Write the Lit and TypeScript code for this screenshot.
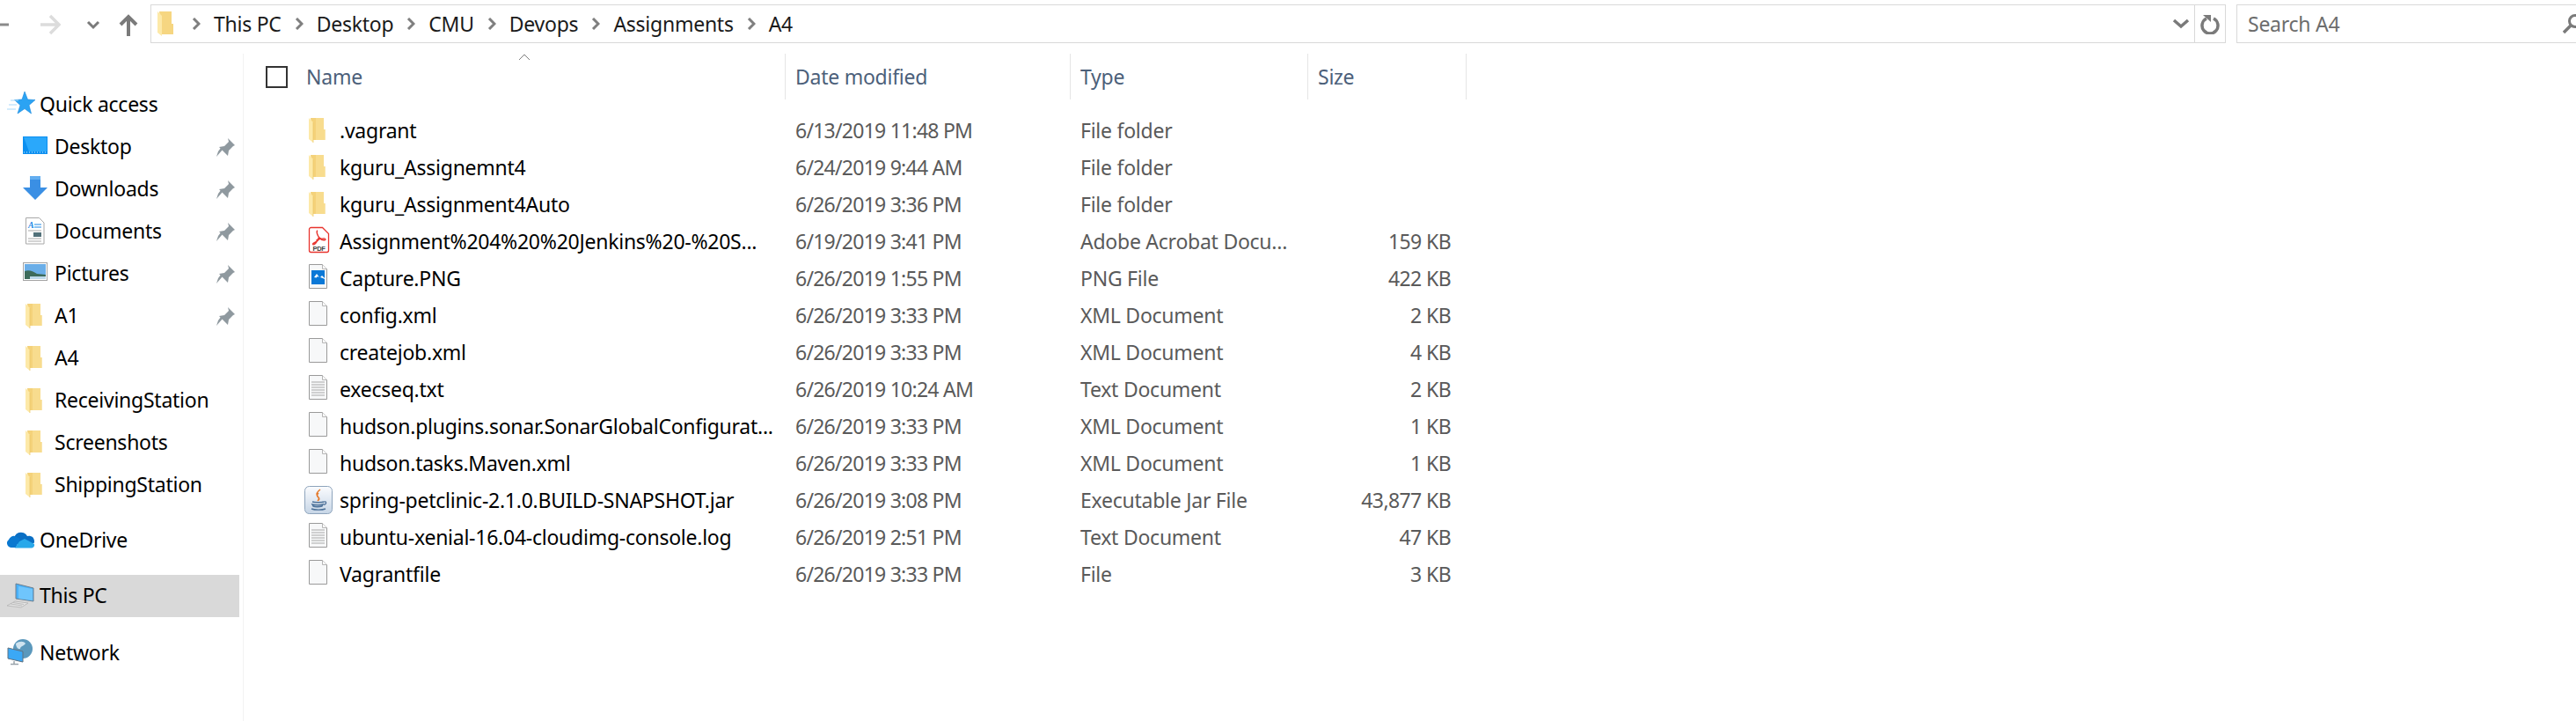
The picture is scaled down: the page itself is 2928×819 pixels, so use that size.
import { LitElement, html, css, svg } from 'lit'
import { customElement } from 'lit/decorators.js'

// icons are all drawn in a 32x32 box so rows line up the same way explorer does it
const icon = (body: unknown) => html`<svg class="ico" width="32" height="32" viewBox="0 0 32 32">${body}</svg>`

const folder = () => icon(svg`
  <path d="M7 2h15v13h1.5v12H10z" fill="#f4d27a"/>
  <path d="M13 2h9v13h1.5v12H13z" fill="#fadf96" opacity=".75"/>
  <path d="M5 2l5 5v23l-5-4z" fill="#fde9a8"/>
  <path d="M10 7v23" stroke="#e9c566" stroke-width=".7"/>`)

const page = (inner: unknown = '') => icon(svg`
  <path d="M5.500 .5h15l5 5v22h-20z" fill="#f7f8f9" stroke="#9a9a9a"/>
  <path d="M20.500 .5v5h5" fill="#fff" stroke="#b5b5b5"/>
  ${inner}`)

const textDoc = () => page(svg`
  <path d="M8 8h15M8 11h15M8 14h15M8 17h15M8 20h15M8 23h15" stroke="#a8a8a8" stroke-width="1"/>`)

const picDoc = () => page(svg`
  <rect x="8" y="7" width="15" height="16" fill="#0a78d7"/>
  <path d="M11 15l3-4 3 4-2-1-1.500 1.500zM18 15l2-2 3 3v1l-2-1z" fill="#fff"/>`)

const pdfDoc = () => icon(svg`
  <path d="M5.500 2.500a2 2 0 0 1 2-2h13l7 7v19a2 2 0 0 1-2 2h-18a2 2 0 0 1-2-2z" fill="#fff" stroke="#e8342e" stroke-width="1.300"/>
  <path d="M15 4c-2 1 0 5 1.500 7.500S13 17 10 18.500c-1 .8 0 2 1.500 1 2-1.500 4-5.500 5-8 2 2.500 5 3.500 7 3 1-.5 0-2-2-1.500-3 0-6 .5-8 2" fill="none" stroke="#e8342e" stroke-width="1.400"/>
  <text x="16.500" y="26.500" text-anchor="middle" font-size="7.500" font-weight="700" font-family="Liberation Sans" fill="#444">PDF</text>`)

const javaIco = () => icon(svg`
  <defs><linearGradient id="jv" x1="0" y1="0" x2="0" y2="1"><stop offset="0" stop-color="#fbfcfe"/><stop offset="1" stop-color="#c6d5e6"/></linearGradient></defs>
  <rect x=".5" y=".5" width="31" height="31" rx="5" fill="url(#jv)" stroke="#8ea4bc"/>
  <path d="M18 4c-5 4-5 6-2 9 1 1.500 0 3-1 4M16 8c-2 2-2 4 0 5 1 1 1 2.500 0 3" fill="none" stroke="#e5792a" stroke-width="1.500"/>
  <path d="M9 18c3 1 11 1 13 0M9 21c3 1 10 1 12 0l-1 2c-3 1-8 1-10 0zM8 26c4 1.500 12 1.500 16 0" fill="none" stroke="#4c7199" stroke-width="1.400"/>
  <path d="M22 18c3-1 4 2 0 3.500" fill="none" stroke="#4c7199" stroke-width="1.200"/>`)

const star = () => icon(svg`
  <path d="M20 1l3.500 9 8.500.5-7 6 2.500 9.500-7.500-5.500-8 5.500 3-9.500-6.500-6 8.500-.5z" fill="#2ba3f3" stroke="#1686dc" stroke-width=".6"/>
  <path d="M4 11h9M2 16h9M0 21h10" stroke="#a7d8fa" stroke-width="1"/>`)

const desktop = () => icon(svg`
  <rect x="2" y="4" width="28" height="20" fill="#0b8ff0"/>
  <path d="M3 5h26v16H9z" fill="#2aa8fb"/>
  <path d="M3 22h26" stroke="#cfe9fd" stroke-width="1" stroke-dasharray="1 2"/>`)

const download = () => icon(svg`
  <path d="M10 1h12v13h8L16 28 2 14h8z" fill="#3a8fe4"/>
  <path d="M10 1h12v4H10z" fill="#63aef0"/>`)

const docs = () => icon(svg`
  <path d="M5.500 .5h15l5.500 5.500v24h-20.500z" fill="#fff" stroke="#a8a8a8"/>
  <text x="8" y="12" font-size="10" font-style="italic" font-weight="700" font-family="Liberation Serif" fill="#1e88e5">A</text>
  <path d="M15 8h8M15 11h8" stroke="#1e88e5" stroke-width="1"/>
  <path d="M8 15h15M8 24h15M8 27h15" stroke="#a8a8a8" stroke-width="1"/>
  <rect x="14" y="17" width="9" height="5" fill="#52717a"/>`)

const pictures = () => icon(svg`
  <rect x="2.500" y="3.500" width="27" height="20" fill="#fff" stroke="#a3a3a3"/>
  <rect x="4" y="5" width="24" height="17" fill="#6aaee8"/>
  <path d="M4 13c5-2 9 0 14 3l10 1v5H4z" fill="#3d6b5a"/>
  <path d="M10 19h18v3H10z" fill="#bcd9ea"/>`)

const onedrive = () => icon(svg`
  <path d="M8 16a8 8 0 0 1 15-5 6 6 0 0 1 8 6c0 1 0 1.500-.5 2L14 22z" fill="#0a6fc4"/>
  <path d="M2 15a6 6 0 0 1 7-4l6 3-5 10H5a5 5 0 0 1-3-9z" fill="#0a78d0"/>
  <path d="M14 17l6-3 11 6a3.500 3.500 0 0 1-3 4.500H9z" fill="#28a8ea"/>`)

const thispc = () => icon(svg`
  <path d="M10 2l20 5v15l-20-3z" fill="#48b1f9" stroke="#6c7f90"/>
  <path d="M13 5l16 3v13l-16-2z" fill="#6fc5fc"/>
  <path d="M0 27l9-5 15 2-8 5z" fill="#e3e3e3" stroke="#b3b3b3" stroke-width=".8"/>
  <path d="M4 25l13 2M7 23.500l12 2" stroke="#b3b3b3" stroke-width=".8"/>`)

const network = () => icon(svg`
  <circle cx="18" cy="11" r="11" fill="#5b98bc"/>
  <path d="M10 5c4-3 9-3 11 0-2 3-6 3-6 6-3 1-5-3-5-6z" fill="#cfe3ef"/>
  <path d="M1 10l17 4v12L1 22z" fill="#3ba8f5" stroke="#60717f"/>
  <path d="M8 25v3M4 28.500h9" stroke="#9aa4ab" stroke-width="1.500"/>`)

const pin = () => html`<svg class="pin" width="21" height="21" viewBox="0 0 21 21">
  <path d="M13 0l8 8-2 1-5 5-1 6L3 10l6-1 5-5z" fill="#8f999f"/>
  <path d="M7 13l-7 8 2-6 3-4z" fill="#8f999f"/>
</svg>`

const crumbChev = () => html`<svg width="10" height="14" viewBox="0 0 10 14"><path d="M2 1l6 6-6 6" fill="none" stroke="#7f7f7f" stroke-width="3"/></svg>`

const quick = [
  { name: 'Desktop', ico: desktop, pinned: true },
  { name: 'Downloads', ico: download, pinned: true },
  { name: 'Documents', ico: docs, pinned: true },
  { name: 'Pictures', ico: pictures, pinned: true },
  { name: 'A1', ico: folder, pinned: true },
  { name: 'A4', ico: folder },
  { name: 'ReceivingStation', ico: folder },
  { name: 'Screenshots', ico: folder },
  { name: 'ShippingStation', ico: folder },
]

const files = [
  { name: '.vagrant', ico: folder, date: '6/13/2019 11:48 PM', type: 'File folder', size: '' },
  { name: 'kguru_Assignemnt4', ico: folder, date: '6/24/2019 9:44 AM', type: 'File folder', size: '' },
  { name: 'kguru_Assignment4Auto', ico: folder, date: '6/26/2019 3:36 PM', type: 'File folder', size: '' },
  { name: 'Assignment%204%20%20Jenkins%20-%20S...', ico: pdfDoc, date: '6/19/2019 3:41 PM', type: 'Adobe Acrobat Docu...', size: '159 KB' },
  { name: 'Capture.PNG', ico: picDoc, date: '6/26/2019 1:55 PM', type: 'PNG File', size: '422 KB' },
  { name: 'config.xml', ico: page, date: '6/26/2019 3:33 PM', type: 'XML Document', size: '2 KB' },
  { name: 'createjob.xml', ico: page, date: '6/26/2019 3:33 PM', type: 'XML Document', size: '4 KB' },
  { name: 'execseq.txt', ico: textDoc, date: '6/26/2019 10:24 AM', type: 'Text Document', size: '2 KB' },
  { name: 'hudson.plugins.sonar.SonarGlobalConfigurat...', ico: page, date: '6/26/2019 3:33 PM', type: 'XML Document', size: '1 KB' },
  { name: 'hudson.tasks.Maven.xml', ico: page, date: '6/26/2019 3:33 PM', type: 'XML Document', size: '1 KB' },
  { name: 'spring-petclinic-2.1.0.BUILD-SNAPSHOT.jar', ico: javaIco, date: '6/26/2019 3:08 PM', type: 'Executable Jar File', size: '43,877 KB' },
  { name: 'ubuntu-xenial-16.04-cloudimg-console.log', ico: textDoc, date: '6/26/2019 2:51 PM', type: 'Text Document', size: '47 KB' },
  { name: 'Vagrantfile', ico: page, date: '6/26/2019 3:33 PM', type: 'File', size: '3 KB' },
]

@customElement('app-root')
export class AppRoot extends LitElement {
  static styles = css`
    :host {
      display: block;
      width: 2928px;
      height: 819px;
      overflow: hidden;
      background: #fff;
      color: #000;
      font-family: 'Noto Sans', sans-serif;
      font-size: 23px;
      letter-spacing: -0.25px;
    }
    .ico { flex: none; overflow: visible; }

    /* top bar */
    .toolbar { display: flex; height: 61px; padding-top: 5px; box-sizing: border-box; }
    .nav { flex: none; width: 171px; height: 44px; }
    .address {
      flex: none;
      width: 2359px;
      height: 44px;
      box-sizing: border-box;
      border: 1px solid #d9d9d9;
      display: flex;
      align-items: center;
      gap: 15px;
      padding-left: 7px;
      color: #1a1a1a;
    }
    .address .folder-wrap { margin-right: 6px; width: 18px; height: 28px; }
    .address .spacer { flex: 1; }
    .drop { margin-right: -10px; }
    .refresh {
      width: 34px;
      height: 100%;
      border-left: 1px solid #d9d9d9;
      display: flex;
      align-items: center;
      justify-content: center;
    }
    .search {
      flex: none;
      width: 396px;
      height: 44px;
      margin-left: 12px;
      box-sizing: border-box;
      border: 1px solid #d9d9d9;
      display: flex;
      align-items: center;
      justify-content: space-between;
      padding: 0 0 0 12px;
      color: #6d6d6d;
    }

    .body { display: flex; height: 758px; }

    /* left tree */
    .side {
      flex: none;
      width: 277px;
      box-sizing: border-box;
      border-right: 1px solid #f2f2f2;
      padding-top: 34px;
    }
    .tree-row {
      width: 272px;
      height: 48px;
      box-sizing: border-box;
      display: flex;
      align-items: center;
      padding-left: 8px;
      gap: 5px;
    }
    .tree-row.child { padding-left: 24px; gap: 6px; }
    .tree-row.sel { background: #d9d9d9; }
    .tree-row .label { flex: 1; padding-bottom: 2px; }
    .tree-row .pin { margin-right: 5px; }
    .group { margin-top: 15px; }
    .group.last { margin-top: 17px; }

    /* details pane */
    .pane { flex: 1; }
    .cols { display: grid; grid-template-columns: 616px 324px 270px 180px; }
    .head { height: 52px; }
    .head > div {
      position: relative;
      display: flex;
      align-items: center;
      box-sizing: border-box;
      padding-left: 11px;
      border-right: 1px solid #e5e5e5;
      color: #4c607a;
    }
    .head > div.first { padding-left: 25px; gap: 21px; }
    .check { width: 25px; height: 25px; box-sizing: border-box; border: 2px solid #333; }
    .caret { position: absolute; left: 312px; top: 0; }
    .rows { margin-top: 14px; }
    .row { height: 42px; align-items: center; }
    .row > div { padding-left: 11px; color: #5a5a5a; white-space: nowrap; }
    .row > .fname {
      padding-left: 69px;
      display: flex;
      align-items: center;
      gap: 8px;
      color: #000;
    }
    .row > .fdate { letter-spacing: -0.75px; }
    .row > .fsize { padding: 0 18px 0 0; text-align: right; letter-spacing: -0.6px; }
  `

  private treeRow(r: { name: string; ico: () => unknown; pinned?: boolean }) {
    return html`<div class="tree-row child">
      ${r.ico()}<span class="label">${r.name}</span>${r.pinned ? pin() : ''}
    </div>`
  }

  render() {
    return html`
      <div class="toolbar">
        <svg class="nav" viewBox="0 0 171 44">
          <path d="M0 23h10" stroke="#8a8a8a" stroke-width="3"/>
          <path d="M46 23h20M57 13l10 10-10 10" fill="none" stroke="#dcdcdc" stroke-width="3.500"/>
          <path d="M100 20l6 6 6-6" fill="none" stroke="#7a7a7a" stroke-width="3"/>
          <path d="M146 36V15M137 23l9-9 9 9" fill="none" stroke="#7a7a7a" stroke-width="4"/>
        </svg>
        <div class="address">
          <div class="folder-wrap">
            <svg width="18" height="28" viewBox="0 0 18 28">
              <path d="M2 0h14v14h2v12H5z" fill="#f6d681"/>
              <path d="M0 0l5 5v23l-5-4z" fill="#fde9a8"/>
            </svg>
          </div>
          ${['This PC', 'Desktop', 'CMU', 'Devops', 'Assignments', 'A4'].map(
            c => html`${crumbChev()}<span>${c}</span>`
          )}
          <span class="spacer"></span>
          <svg class="drop" width="20" height="12" viewBox="0 0 20 12"><path d="M2 2l8 7 8-7" fill="none" stroke="#7a7a7a" stroke-width="3.500"/></svg>
          <div class="refresh">
            <svg width="22" height="24" viewBox="0 0 22 24">
              <path d="M7 6a9 9 0 1 0 8 0" fill="none" stroke="#7a7a7a" stroke-width="3.500"/>
              <path d="M3 2h9v8z" fill="#7a7a7a"/>
            </svg>
          </div>
        </div>
        <div class="search">
          <span>Search A4</span>
          <svg width="24" height="24" viewBox="0 0 24 24">
            <circle cx="14" cy="9" r="6.500" fill="none" stroke="#7a7a7a" stroke-width="3"/>
            <path d="M9 14l-8 8" stroke="#7a7a7a" stroke-width="3.500"/>
          </svg>
        </div>
      </div>

      <div class="body">
        <div class="side">
          <div class="tree-row">${star()}<span class="label">Quick access</span></div>
          ${quick.map(r => this.treeRow(r))}
          <div class="tree-row group">${onedrive()}<span class="label">OneDrive</span></div>
          <div class="tree-row group sel">${thispc()}<span class="label">This PC</span></div>
          <div class="tree-row group last">${network()}<span class="label">Network</span></div>
        </div>

        <div class="pane">
          <div class="cols head">
            <div class="first">
              <span class="check"></span><span>Name</span>
              <svg class="caret" width="14" height="8" viewBox="0 0 14 8"><path d="M1 7l6-6 6 6" fill="none" stroke="#7d7d7d" stroke-width="1"/></svg>
            </div>
            <div>Date modified</div>
            <div>Type</div>
            <div>Size</div>
          </div>
          <div class="rows">
            ${files.map(
              f => html`<div class="cols row">
                <div class="fname">${f.ico()}<span>${f.name}</span></div>
                <div class="fdate">${f.date}</div>
                <div>${f.type}</div>
                <div class="fsize">${f.size}</div>
              </div>`
            )}
          </div>
        </div>
      </div>
    `
  }
}
